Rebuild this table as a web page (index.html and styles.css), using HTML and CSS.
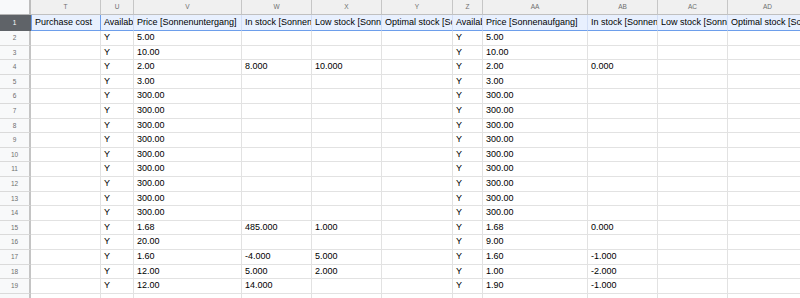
FILE: index.html
```html
<!DOCTYPE html>
<html lang="en">
<head>
<meta charset="utf-8">
<title>Sheet</title>
<link rel="stylesheet" href="styles.css">
</head>
<body>
<div class="sheet">
  <div class="row colhead">
    <div class="c corner"></div><div class="c">T</div><div class="c">U</div><div class="c">V</div><div class="c">W</div><div class="c">X</div><div class="c">Y</div><div class="c">Z</div><div class="c">AA</div><div class="c">AB</div><div class="c">AC</div><div class="c">AD</div>
  </div>
  <div class="row sel">
    <div class="c rh">1</div><div class="c active">Purchase cost</div><div class="c">Available</div><div class="c">Price [Sonnenuntergang]</div><div class="c">In stock [Sonnenuntergang]</div><div class="c">Low stock [Sonnenuntergang]</div><div class="c">Optimal stock [Sonnenuntergang]</div><div class="c">Available</div><div class="c">Price [Sonnenaufgang]</div><div class="c">In stock [Sonnenaufgang]</div><div class="c">Low stock [Sonnenaufgang]</div><div class="c">Optimal stock [Sonnenaufgang]</div>
  </div>
  <div class="row"><div class="c rh">2</div><div class="c"></div><div class="c">Y</div><div class="c">5.00</div><div class="c"></div><div class="c"></div><div class="c"></div><div class="c">Y</div><div class="c">5.00</div><div class="c"></div><div class="c"></div><div class="c"></div></div>
  <div class="row"><div class="c rh">3</div><div class="c"></div><div class="c">Y</div><div class="c">10.00</div><div class="c"></div><div class="c"></div><div class="c"></div><div class="c">Y</div><div class="c">10.00</div><div class="c"></div><div class="c"></div><div class="c"></div></div>
  <div class="row"><div class="c rh">4</div><div class="c"></div><div class="c">Y</div><div class="c">2.00</div><div class="c">8.000</div><div class="c">10.000</div><div class="c"></div><div class="c">Y</div><div class="c">2.00</div><div class="c">0.000</div><div class="c"></div><div class="c"></div></div>
  <div class="row"><div class="c rh">5</div><div class="c"></div><div class="c">Y</div><div class="c">3.00</div><div class="c"></div><div class="c"></div><div class="c"></div><div class="c">Y</div><div class="c">3.00</div><div class="c"></div><div class="c"></div><div class="c"></div></div>
  <div class="row"><div class="c rh">6</div><div class="c"></div><div class="c">Y</div><div class="c">300.00</div><div class="c"></div><div class="c"></div><div class="c"></div><div class="c">Y</div><div class="c">300.00</div><div class="c"></div><div class="c"></div><div class="c"></div></div>
  <div class="row"><div class="c rh">7</div><div class="c"></div><div class="c">Y</div><div class="c">300.00</div><div class="c"></div><div class="c"></div><div class="c"></div><div class="c">Y</div><div class="c">300.00</div><div class="c"></div><div class="c"></div><div class="c"></div></div>
  <div class="row"><div class="c rh">8</div><div class="c"></div><div class="c">Y</div><div class="c">300.00</div><div class="c"></div><div class="c"></div><div class="c"></div><div class="c">Y</div><div class="c">300.00</div><div class="c"></div><div class="c"></div><div class="c"></div></div>
  <div class="row"><div class="c rh">9</div><div class="c"></div><div class="c">Y</div><div class="c">300.00</div><div class="c"></div><div class="c"></div><div class="c"></div><div class="c">Y</div><div class="c">300.00</div><div class="c"></div><div class="c"></div><div class="c"></div></div>
  <div class="row"><div class="c rh">10</div><div class="c"></div><div class="c">Y</div><div class="c">300.00</div><div class="c"></div><div class="c"></div><div class="c"></div><div class="c">Y</div><div class="c">300.00</div><div class="c"></div><div class="c"></div><div class="c"></div></div>
  <div class="row"><div class="c rh">11</div><div class="c"></div><div class="c">Y</div><div class="c">300.00</div><div class="c"></div><div class="c"></div><div class="c"></div><div class="c">Y</div><div class="c">300.00</div><div class="c"></div><div class="c"></div><div class="c"></div></div>
  <div class="row"><div class="c rh">12</div><div class="c"></div><div class="c">Y</div><div class="c">300.00</div><div class="c"></div><div class="c"></div><div class="c"></div><div class="c">Y</div><div class="c">300.00</div><div class="c"></div><div class="c"></div><div class="c"></div></div>
  <div class="row"><div class="c rh">13</div><div class="c"></div><div class="c">Y</div><div class="c">300.00</div><div class="c"></div><div class="c"></div><div class="c"></div><div class="c">Y</div><div class="c">300.00</div><div class="c"></div><div class="c"></div><div class="c"></div></div>
  <div class="row"><div class="c rh">14</div><div class="c"></div><div class="c">Y</div><div class="c">300.00</div><div class="c"></div><div class="c"></div><div class="c"></div><div class="c">Y</div><div class="c">300.00</div><div class="c"></div><div class="c"></div><div class="c"></div></div>
  <div class="row"><div class="c rh">15</div><div class="c"></div><div class="c">Y</div><div class="c">1.68</div><div class="c">485.000</div><div class="c">1.000</div><div class="c"></div><div class="c">Y</div><div class="c">1.68</div><div class="c">0.000</div><div class="c"></div><div class="c"></div></div>
  <div class="row"><div class="c rh">16</div><div class="c"></div><div class="c">Y</div><div class="c">20.00</div><div class="c"></div><div class="c"></div><div class="c"></div><div class="c">Y</div><div class="c">9.00</div><div class="c"></div><div class="c"></div><div class="c"></div></div>
  <div class="row"><div class="c rh">17</div><div class="c"></div><div class="c">Y</div><div class="c">1.60</div><div class="c">-4.000</div><div class="c">5.000</div><div class="c"></div><div class="c">Y</div><div class="c">1.60</div><div class="c">-1.000</div><div class="c"></div><div class="c"></div></div>
  <div class="row"><div class="c rh">18</div><div class="c"></div><div class="c">Y</div><div class="c">12.00</div><div class="c">5.000</div><div class="c">2.000</div><div class="c"></div><div class="c">Y</div><div class="c">1.00</div><div class="c">-2.000</div><div class="c"></div><div class="c"></div></div>
  <div class="row"><div class="c rh">19</div><div class="c"></div><div class="c">Y</div><div class="c">12.00</div><div class="c">14.000</div><div class="c"></div><div class="c"></div><div class="c">Y</div><div class="c">1.90</div><div class="c">-1.000</div><div class="c"></div><div class="c"></div></div>
  <div class="row"><div class="c rh">20</div><div class="c"></div><div class="c"></div><div class="c"></div><div class="c"></div><div class="c"></div><div class="c"></div><div class="c"></div><div class="c"></div><div class="c"></div><div class="c"></div><div class="c"></div></div>
</div>
</body>
</html>
```

FILE: styles.css
```css
html, body {
  margin: 0;
  padding: 0;
  background: #ffffff;
  overflow: hidden;
}

.sheet {
  width: 800px;
  height: 298px;
  overflow: hidden;
  font-family: "Liberation Sans", Arial, sans-serif;
}

.row {
  display: grid;
  grid-template-columns: 31px 70px 33px 108px 70px 70px 71px 30px 105px 70px 70px 80px;
  height: 14.6px;
}

.c {
  box-sizing: border-box;
  border-right: 1px solid #e2e2e2;
  border-bottom: 1px solid #e2e2e2;
  padding: 0 3px;
  font-size: 9px;
  line-height: 13.6px;
  color: #000000;
  white-space: nowrap;
  overflow: hidden;
  text-overflow: clip;
}

/* column header row */
.colhead {
  height: 15px;
}

.colhead .c {
  background: #f0f0f0;
  border-right: 1px solid #c6c6c6;
  border-bottom: 1px solid #c0c0c0;
  color: #6e6e6e;
  font-size: 6.5px;
  line-height: 14px;
  text-align: center;
  padding: 0;
}

.colhead .corner {
  background: #f8f9fa;
  border-right: 2px solid #bdbdbd;
  border-bottom: 1px solid #b5b5b5;
}

/* row headers */
.rh {
  background: #f8f9fa;
  border-right: 2px solid #c4c4c4;
  border-bottom: 1px solid #dadada;
  color: #6e6e6e;
  font-size: 6.5px;
  text-align: center;
  padding: 0;
}

/* selected row 1 */
.sel {
  height: 16px;
}

.sel .c {
  background: #e8f0fe;
  border-right-color: #d2def5;
  border-bottom: 1px solid #6d9eeb;
  line-height: 15px;
  color: #000000;
}

.sel .rh {
  background: #5f6368;
  color: #ffffff;
  border-right: 2px solid #5f6368;
  border-bottom-color: #5f6368;
}

.sel .active {
  box-shadow: inset 1px 0 0 #6d9eeb;
  border-right: 1px solid #6d9eeb;
  padding-left: 4px;
}
```
